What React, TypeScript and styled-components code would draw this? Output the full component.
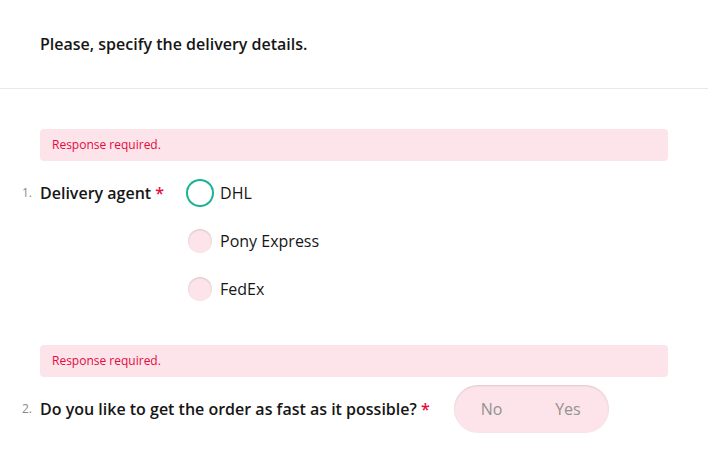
import React from "react";
import styled, { createGlobalStyle } from "styled-components";

const Global = createGlobalStyle`
  html, body { margin: 0; padding: 0; background: #ffffff; }
  body { font-family: "Open Sans", "Liberation Sans", sans-serif; color: #161616; }
  * { box-sizing: border-box; }
`;

const Page = styled.div`
  width: 708px;
  height: 473px;
  background: #ffffff;
  border-radius: 4px;
  overflow: hidden;
`;

const Header = styled.header`
  height: 89px;
  display: flex;
  align-items: center;
  padding: 0 40px 1px;
  border-bottom: 1px solid #e8e8e8;
`;

const Title = styled.h1`
  margin: 0;
  font-size: 16px;
  line-height: 24px;
  font-weight: 600;
  color: #161616;
`;

const Body = styled.main`
  display: flex;
  flex-direction: column;
  padding: 40px 40px 0 0;
`;

const QuestionBlock = styled.section<{ $last?: boolean }>`
  display: flex;
  flex-direction: column;
  gap: 8px;
  margin-bottom: ${(p) => (p.$last ? "0" : "32px")};
`;

const ErrorBox = styled.div`
  margin-left: 40px;
  height: 32px;
  display: flex;
  align-items: center;
  padding: 0 12px;
  background: #fce4ea;
  border-radius: 4px;
  color: #e60a3e;
  font-size: 12px;
  line-height: 16px;
`;

const QuestionRow = styled.div`
  display: flex;
  align-items: flex-start;
  padding-left: 22px;
`;

const Number = styled.span`
  width: 18px;
  flex: none;
  font-size: 12px;
  line-height: 48px;
  color: #8a8a8a;
`;

const QTitle = styled.div`
  font-size: 16px;
  line-height: 48px;
  font-weight: 600;
  color: #161616;
  margin-right: 24px;
  white-space: nowrap;
`;

const Req = styled.span`
  color: #e60a3e;
`;

const RadioList = styled.div`
  display: flex;
  flex-direction: column;
`;

const RadioItem = styled.label`
  display: flex;
  align-items: center;
  height: 48px;
  gap: 8px;
  font-size: 16px;
  color: #161616;
`;

const Circle = styled.span<{ $focused?: boolean }>`
  width: 24px;
  height: 24px;
  border-radius: 50%;
  flex: none;
  background: ${(p) => (p.$focused ? "#ffffff" : "#fce4ea")};
  box-shadow: ${(p) =>
    p.$focused ? "0 0 0 2px #19b394" : "inset 0 1px 2px rgba(0,0,0,0.15)"};
`;

const Toggle = styled.div`
  width: 155px;
  height: 48px;
  border-radius: 24px;
  background: #fce4ea;
  box-shadow: inset 0 1px 2px rgba(0, 0, 0, 0.12);
  display: flex;
  align-items: center;
  justify-content: space-between;
  padding: 0 28px 0 27px;
  color: #929292;
  font-size: 16px;
`;

const ToggleLabel = styled.span``;

const options = [
  { label: "DHL", focused: true },
  { label: "Pony Express" },
  { label: "FedEx" },
];

export default function App() {
  return (
    <Page>
      <Global />
      <Header>
        <Title>Please, specify the delivery details.</Title>
      </Header>
      <Body>
        <QuestionBlock>
          <ErrorBox>Response required.</ErrorBox>
          <QuestionRow>
            <Number>1.</Number>
            <QTitle>
              Delivery agent <Req>*</Req>
            </QTitle>
            <RadioList>
              {options.map((o) => (
                <RadioItem key={o.label}>
                  <Circle $focused={o.focused} />
                  {o.label}
                </RadioItem>
              ))}
            </RadioList>
          </QuestionRow>
        </QuestionBlock>
        <QuestionBlock $last>
          <ErrorBox>Response required.</ErrorBox>
          <QuestionRow>
            <Number>2.</Number>
            <QTitle>
              Do you like to get the order as fast as it possible? <Req>*</Req>
            </QTitle>
            <Toggle>
              <ToggleLabel>No</ToggleLabel>
              <ToggleLabel>Yes</ToggleLabel>
            </Toggle>
          </QuestionRow>
        </QuestionBlock>
      </Body>
    </Page>
  );
}
